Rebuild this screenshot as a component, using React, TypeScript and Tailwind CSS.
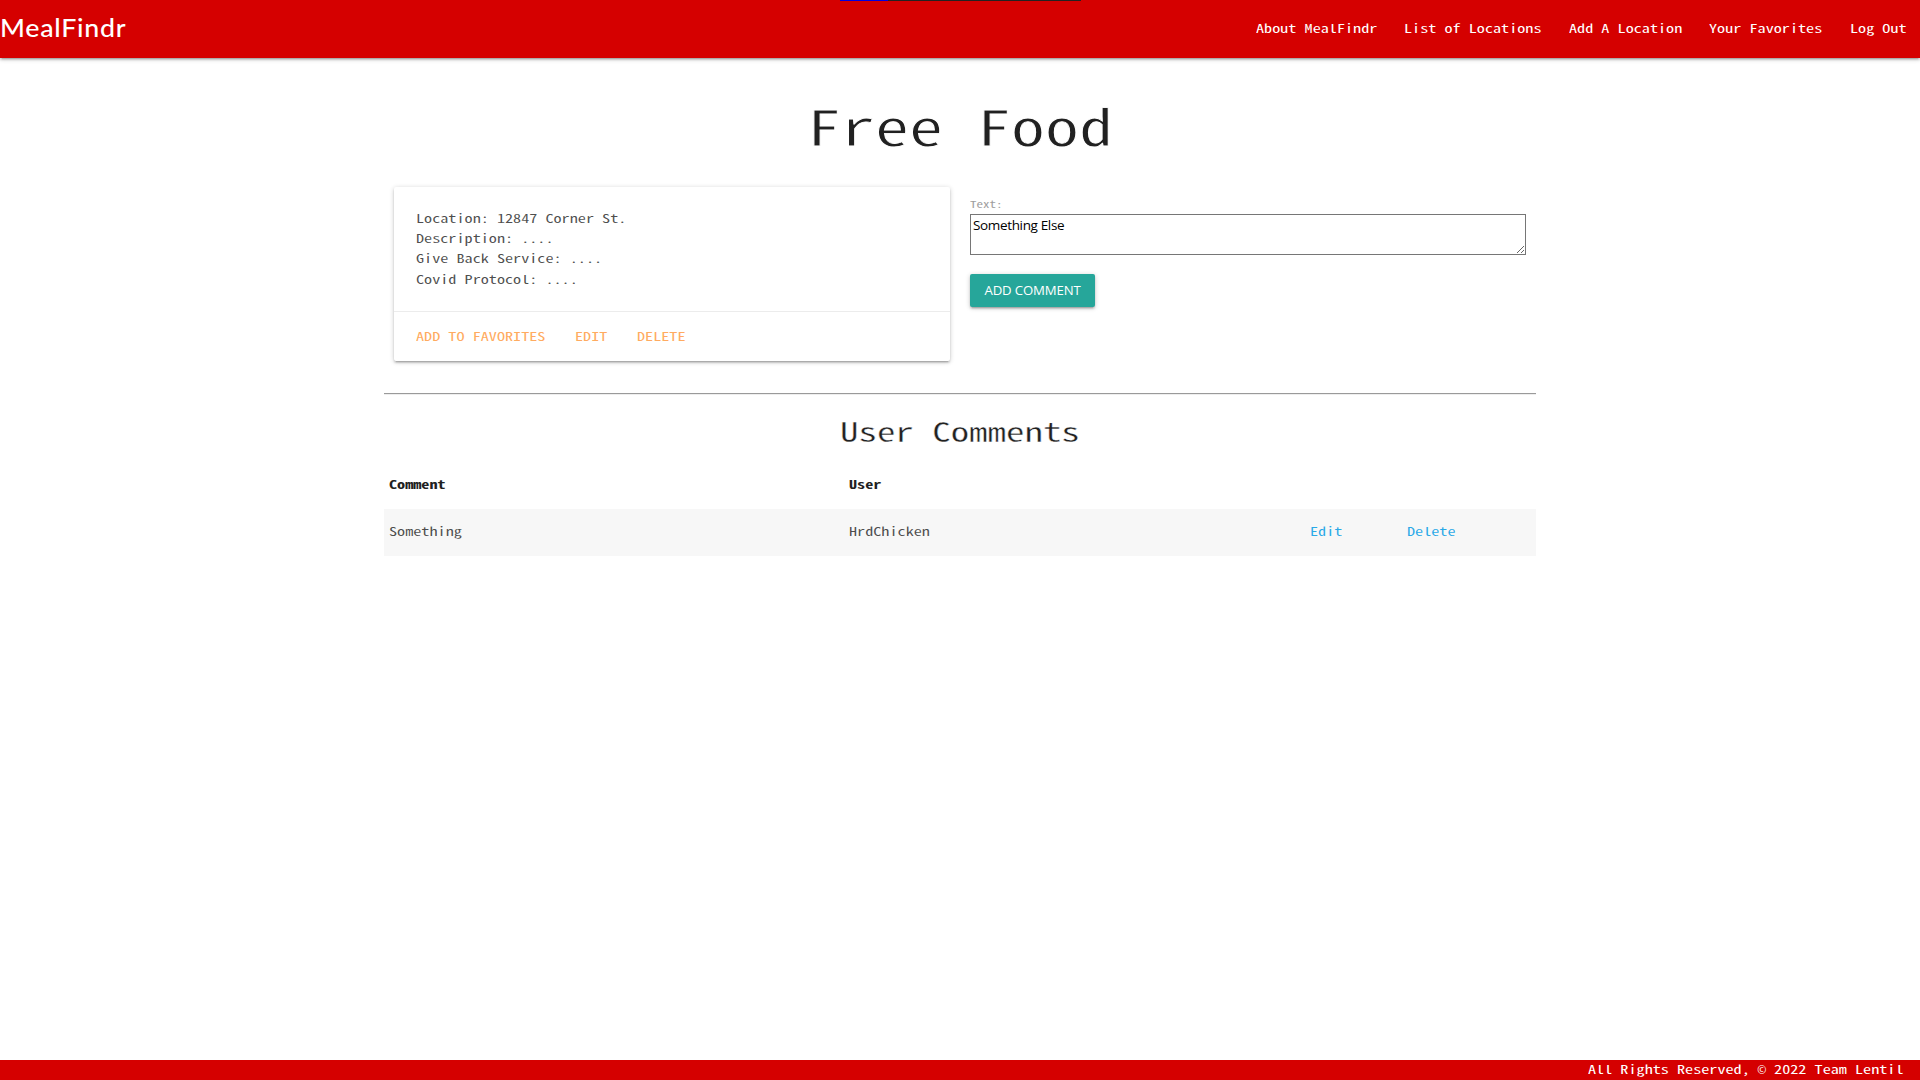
const links = ["About MealFindr", "List of Locations", "Add A Location", "Your Favorites", "Log Out"];

const details = ["Location: 12847 Corner St.", "Description: ....", "Give Back Service: ....", "Covid Protocol: ...."];

// Monospaced text widened so that every character takes `pitch` pixels.
function Mono({ children, pitch = 8.1 }: { children: string; pitch?: number }) {
  return (
    <span className="inline-block whitespace-pre text-left align-top" style={{ width: children.length * pitch }}>
      <span
        className="inline-block origin-left scale-x-[1.388] align-top"
        style={{ fontSize: (pitch * 2) / 1.388 }}
      >
        {children}
      </span>
    </span>
  );
}

export default function App() {
  return (
    <div className="flex h-[1080px] w-[1920px] flex-col overflow-hidden bg-white font-['Noto_Sans_Mono_CJK_SC','Liberation_Mono',monospace] text-[11.67px] leading-[20.25px] text-[rgba(0,0,0,0.87)]">
      <nav className="relative flex h-[58px] shrink-0 items-center justify-between bg-[#d50000] text-white shadow-[0_2px_2px_0_rgba(0,0,0,0.14),0_3px_1px_-2px_rgba(0,0,0,0.12),0_1px_5px_0_rgba(0,0,0,0.2)]">
        <div className="absolute left-[840px] top-0 flex h-px w-[241px] bg-[#222]">
          <div className="h-px w-12 bg-[#0000e0]" />
        </div>
        <a className="-mt-1 origin-left scale-x-[1.05] font-['Lato',sans-serif] text-[25.5px] font-medium tracking-[0.7px]">MealFindr</a>
        <ul className="flex gap-[27px] pr-[13.5px] pb-[2px]">
          {links.map((l) => (
            <li key={l}>
              <Mono>{l}</Mono>
            </li>
          ))}
        </ul>
      </nav>

      <main className="mx-auto w-[1152px] grow">
        <h1 className="mt-[29px] text-center leading-[75px] text-[#212121] [-webkit-text-stroke:0.8px_white]">
          <Mono pitch={34}>Free Food</Mono>
        </h1>

        <div className="mt-[25px] flex">
          <section className="ml-[10px] h-[174px] w-[556px] rounded-[2px] bg-white shadow-[0_2px_2px_0_rgba(0,0,0,0.14),0_3px_1px_-2px_rgba(0,0,0,0.12),0_1px_5px_0_rgba(0,0,0,0.2)]">
            <div className="h-[124px] px-[21.6px] pt-[20.8px] leading-[20.3px] text-black/70">
              {details.map((d) => (
                <p key={d}>
                  <Mono>{d}</Mono>
                </p>
              ))}
            </div>
            <div className="flex gap-[29.7px] border-t border-[rgba(160,160,160,0.2)] px-[21.6px] pt-[14.4px] text-[#ffab60]">
              <a><Mono>ADD TO FAVORITES</Mono></a>
              <a><Mono>EDIT</Mono></a>
              <a><Mono>DELETE</Mono></a>
            </div>
          </section>

          <form className="ml-5 w-[556px]">
            <label className="block pt-[7px] leading-5 text-[#9e9e9e]">
              <Mono pitch={6.48}>Text:</Mono>
            </label>
            <textarea
              className="block h-[41px] w-full resize border border-[#767676] bg-white p-[2px] font-['Open_Sans',sans-serif] text-[13.5px] leading-[17px] tracking-[-0.35px] text-black"
              defaultValue="Something Else"
            />
            <button
              type="button"
              className="mt-[19px] block h-[33px] w-[125px] rounded-[2px] bg-[#26a69a] font-['Open_Sans',sans-serif] text-[13.2px] tracking-[-0.15px] text-white shadow-[0_2px_2px_0_rgba(0,0,0,0.14),0_3px_1px_-2px_rgba(0,0,0,0.12),0_1px_5px_0_rgba(0,0,0,0.2)]"
            >
              ADD COMMENT
            </button>
          </form>
        </div>

        <div className="mt-[32px] h-px bg-[#9a9a9a]" />
        <div className="h-px bg-[#eeeeee]" />
        <h2 className="mt-[16px] text-center leading-[40px] text-[#212121] [-webkit-text-stroke:0.35px_white]">
          <Mono pitch={18.45}>User Comments</Mono>
        </h2>

        <div className="mt-[10px] grid h-[47px] grid-cols-[460.5px_461px_96.5px_1fr] items-center pl-[4.5px] font-bold text-[#212121]">
          <Mono>Comment</Mono>
          <Mono>User</Mono>
        </div>
        <div className="mt-[1px] grid h-[47px] grid-cols-[460.5px_461px_96.5px_1fr] items-center bg-[#f7f7f7] pb-[2px] pl-[4.5px] text-black/70">
          <Mono>Something</Mono>
          <Mono>HrdChicken</Mono>
          <a className="text-[#039be5]/85"><Mono>Edit</Mono></a>
          <a className="text-[#039be5]/85"><Mono>Delete</Mono></a>
        </div>
      </main>

      <footer className="flex h-5 shrink-0 justify-end bg-[#d50000] pr-4 leading-[18px] text-white">
        <Mono>All Rights Reserved, </Mono>
        <span className="-ml-px w-[9.1px] pt-px text-center font-['Open_Sans',sans-serif] text-[11px]">©</span>
        <Mono> 2022 Team Lentil</Mono>
      </footer>
    </div>
  );
}
